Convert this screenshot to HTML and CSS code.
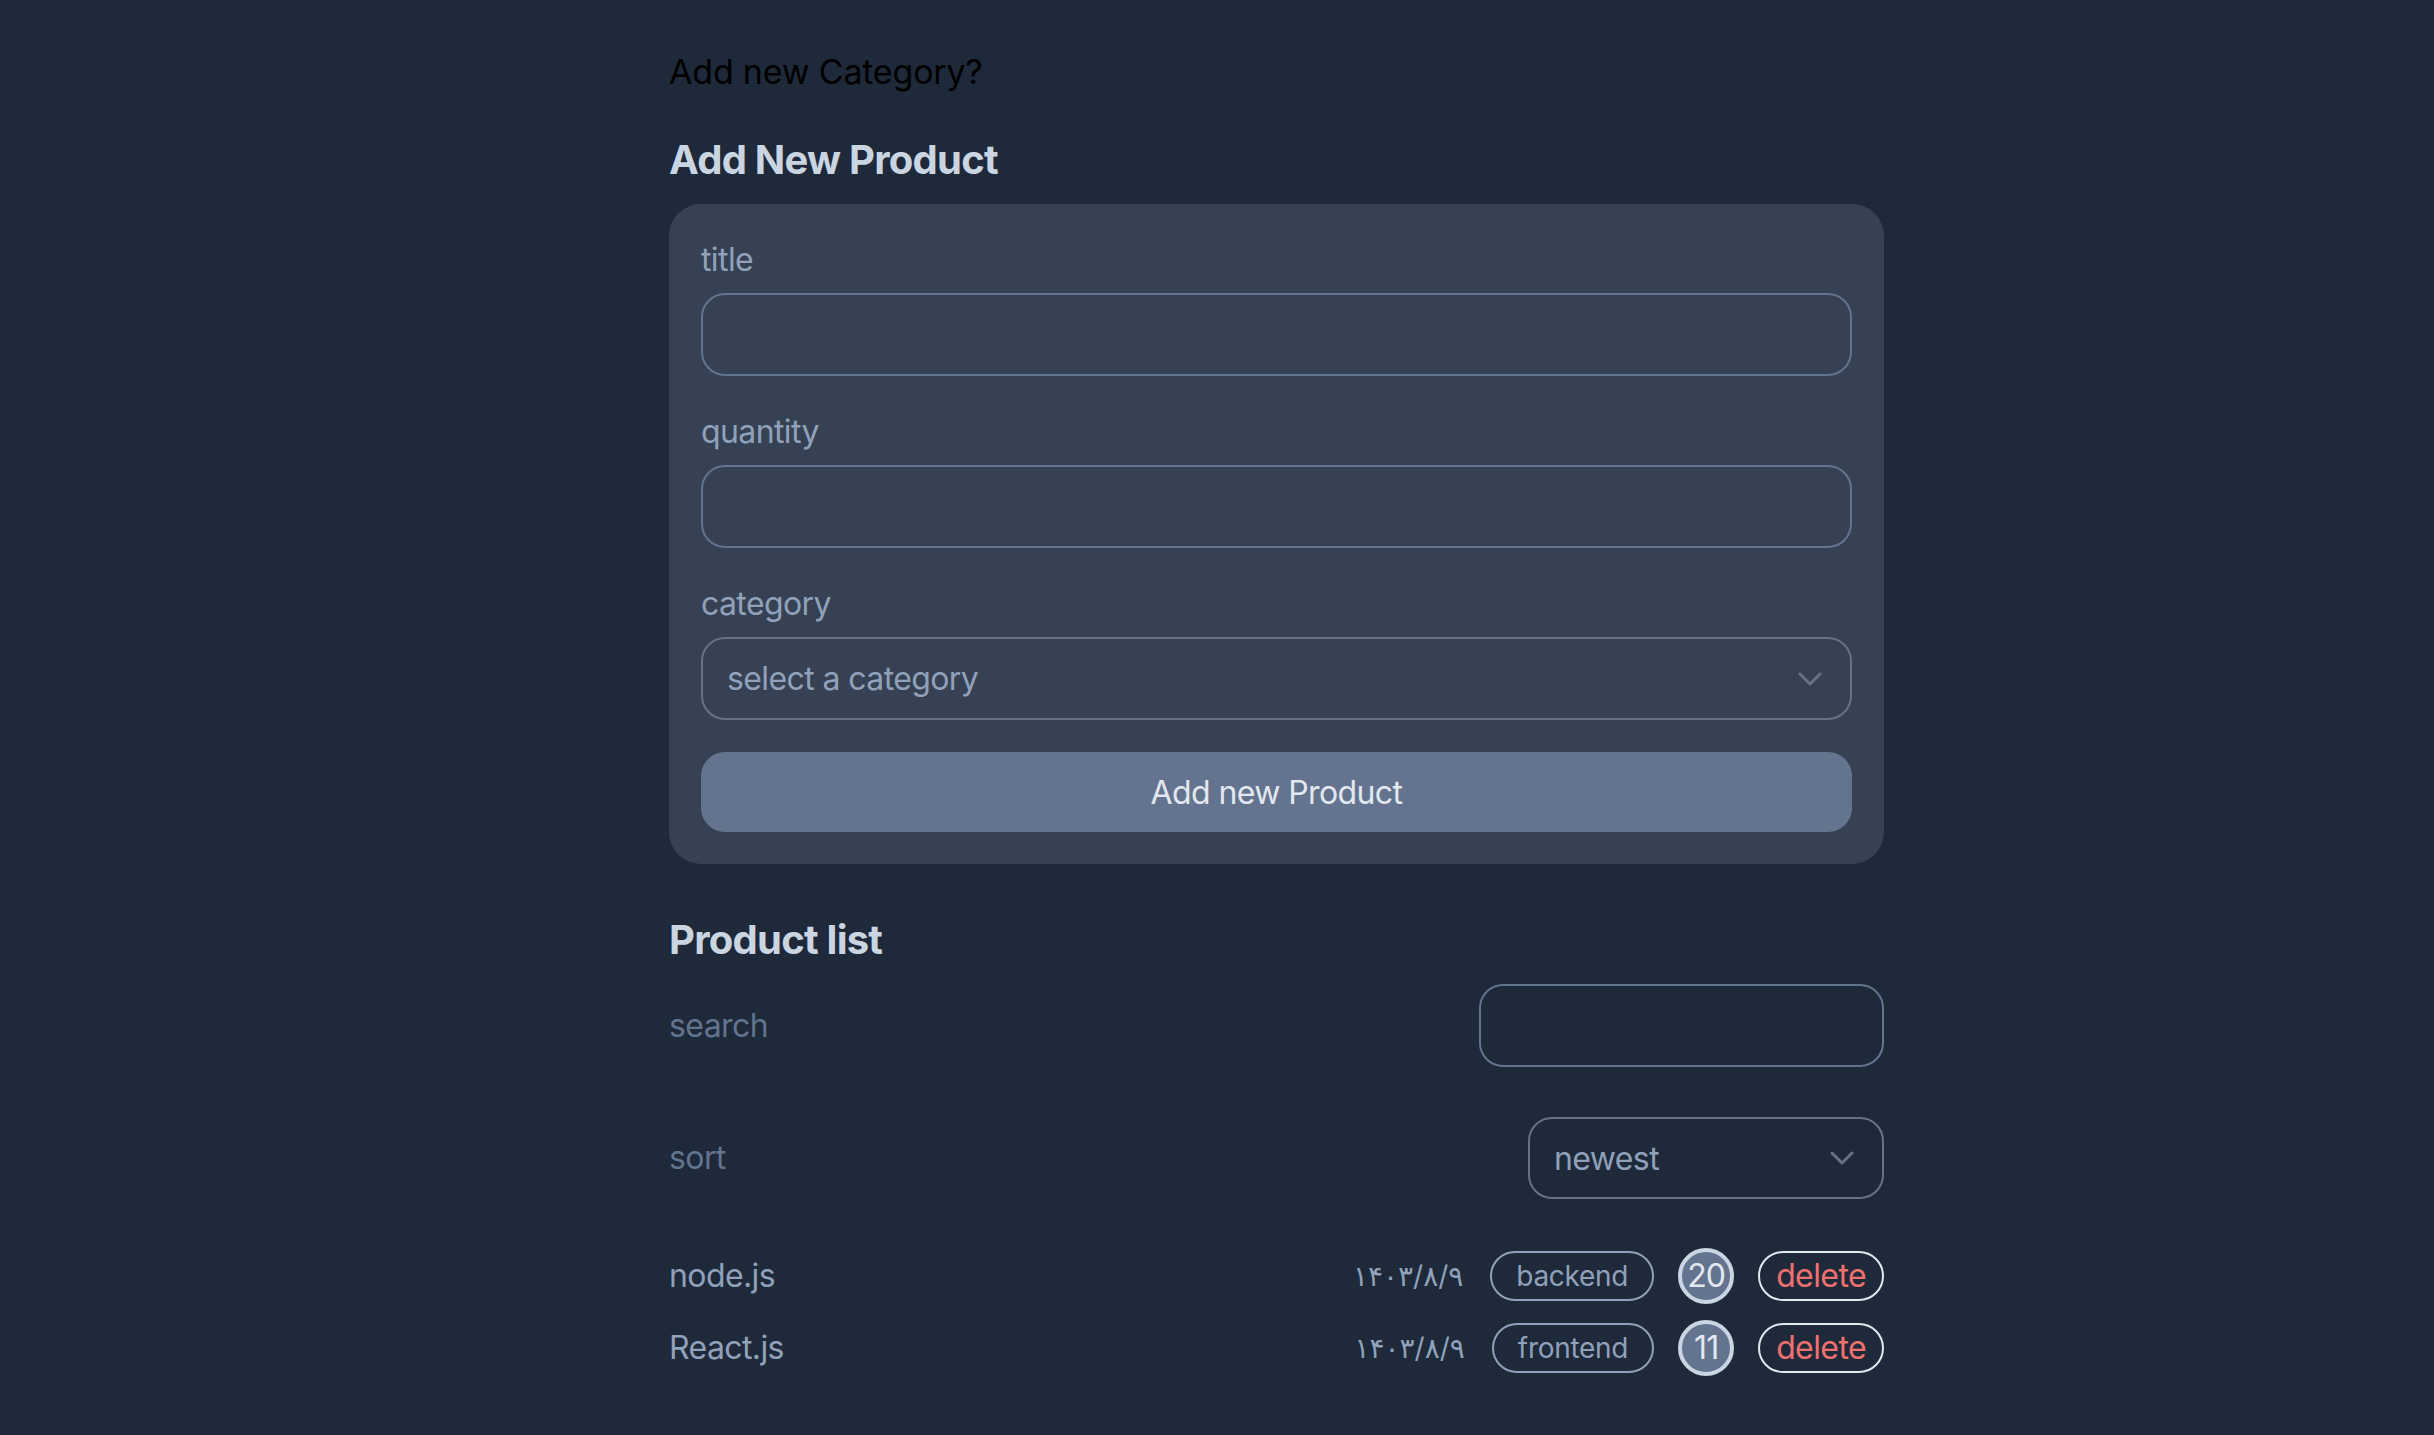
FILE: index.html
```html
<!DOCTYPE html>
<html lang="en">
<head>
<meta charset="utf-8">
<title>Products</title>
<link rel="stylesheet" href="styles.css">
</head>
<body>
<main class="page">
  <p class="category-toggle">Add new Category?</p>

  <section class="form-section">
    <h2 class="section-title">Add New Product</h2>
    <form class="card">
      <div class="field">
        <label class="field-label" for="title">title</label>
        <input class="field-input" id="title" type="text">
      </div>
      <div class="field">
        <label class="field-label" for="quantity">quantity</label>
        <input class="field-input" id="quantity" type="number">
      </div>
      <div class="field">
        <label class="field-label" for="category">category</label>
        <div class="select-wrap">
          <select class="field-input field-select" id="category">
            <option>select a category</option>
          </select>
          <svg class="chevron" viewBox="0 0 24 14" width="24" height="14" aria-hidden="true"><path d="M2 2 L12 12 L22 2" fill="none" stroke="currentColor" stroke-width="3" stroke-linecap="round" stroke-linejoin="round"/></svg>
        </div>
      </div>
      <button class="submit" type="button">Add new Product</button>
    </form>
  </section>

  <section class="list-section">
    <h2 class="section-title list-title">Product list</h2>
    <div class="filter-row">
      <label class="filter-label" for="search">search</label>
      <input class="filter-input search-input" id="search" type="text">
    </div>
    <div class="filter-row sort-row">
      <label class="filter-label" for="sort">sort</label>
      <div class="select-wrap sort-wrap">
        <select class="filter-input sort-select" id="sort">
          <option>newest</option>
          <option>oldest</option>
        </select>
        <svg class="chevron" viewBox="0 0 24 14" width="24" height="14" aria-hidden="true"><path d="M2 2 L12 12 L22 2" fill="none" stroke="currentColor" stroke-width="3" stroke-linecap="round" stroke-linejoin="round"/></svg>
      </div>
    </div>

    <ul class="product-list">
      <li class="product-row">
        <span class="product-name">node.js</span>
        <div class="product-meta">
          <span class="product-date">۱۴۰۳/۸/۹</span>
          <span class="tag">backend</span>
          <span class="qty">20</span>
          <button class="delete" type="button">delete</button>
        </div>
      </li>
      <li class="product-row">
        <span class="product-name">React.js</span>
        <div class="product-meta">
          <span class="product-date">۱۴۰۳/۸/۹</span>
          <span class="tag">frontend</span>
          <span class="qty">11</span>
          <button class="delete" type="button">delete</button>
        </div>
      </li>
    </ul>
  </section>
</main>
</body>
</html>
```

FILE: styles.css
```css
html {
  background: #1e2939;
}

body {
  margin: 0;
  min-height: 100vh;
  background: #1e2939;
  font-family: Inter, "DejaVu Sans", "Noto Sans", sans-serif;
  font-size: 32px;
  line-height: 48px;
  letter-spacing: -0.6px;
}

.page {
  width: 1215px;
  margin-left: 669px;
  padding-top: 46px;
}

.category-toggle {
  margin: 0;
  font-size: 34px;
  line-height: 51px;
  color: #000;
  letter-spacing: -0.2px;
}

.section-title {
  margin: 35px 0 16px;
  font-size: 40px;
  line-height: 56px;
  font-weight: 700;
  color: #cad5e2;
  letter-spacing: -0.75px;
}

.card {
  background: #364153;
  border-radius: 32px;
  padding: 32px;
}

.field {
  margin-bottom: 32px;
}

.field-label {
  display: block;
  margin-bottom: 9px;
  color: #90a1b9;
}

.field-input {
  display: block;
  box-sizing: border-box;
  width: 100%;
  height: 83px;
  padding: 0 24px;
  border: 2px solid #62748e;
  border-radius: 24px;
  background: transparent;
  color: #90a1b9;
  font-family: inherit;
  font-size: 32px;
  letter-spacing: -0.6px;
  outline: none;
}

.field-select {
  border-color: #6a7282;
  appearance: none;
  -webkit-appearance: none;
}

.select-wrap {
  position: relative;
}

.chevron {
  position: absolute;
  right: 30px;
  top: 50%;
  margin-top: -7px;
  color: #6a7282;
  pointer-events: none;
}

.submit {
  display: block;
  width: 100%;
  height: 80px;
  border: none;
  border-radius: 24px;
  background: #64748e;
  color: #e2e8f0;
  font-family: inherit;
  font-size: 32px;
  letter-spacing: -0.6px;
}

.list-title {
  margin-top: 48px;
}

.filter-row {
  display: flex;
  justify-content: space-between;
  align-items: center;
}

.sort-row {
  margin-top: 50px;
}

.filter-label {
  color: #62748e;
}

.filter-input {
  box-sizing: border-box;
  height: 83px;
  padding: 0 24px;
  border: 2px solid #62748e;
  border-radius: 24px;
  background: transparent;
  color: #90a1b9;
  font-family: inherit;
  font-size: 32px;
  letter-spacing: -0.6px;
  outline: none;
}

.search-input {
  width: 405px;
}

.sort-wrap {
  width: 356px;
}

.sort-select {
  width: 100%;
  height: 82px;
  border-color: #6a7282;
  appearance: none;
  -webkit-appearance: none;
}

.product-list {
  list-style: none;
  margin: 49px 0 0;
  padding: 0;
  display: flex;
  flex-direction: column;
  gap: 16px;
}

.product-row {
  display: flex;
  justify-content: space-between;
  align-items: center;
  height: 56px;
}

.product-name {
  color: #90a1b9;
}

.product-meta {
  display: flex;
  align-items: center;
  gap: 24px;
}

.product-date {
  color: #90a1b9;
  font-size: 28px;
  letter-spacing: 0;
  padding-right: 3px;
}

.tag {
  box-sizing: border-box;
  display: flex;
  align-items: center;
  height: 50px;
  padding: 0 24px;
  border: 2px solid #90a1b9;
  border-radius: 999px;
  color: #90a1b9;
  font-size: 28px;
  letter-spacing: -0.3px;
}

.qty {
  box-sizing: border-box;
  display: flex;
  align-items: center;
  justify-content: center;
  width: 56px;
  height: 56px;
  border: 4px solid #cad5e2;
  border-radius: 50%;
  background: #64748e;
  color: #e2e8f0;
  font-size: 32px;
  letter-spacing: -1px;
}

.delete {
  box-sizing: border-box;
  height: 50px;
  padding: 0 16px;
  border: 2px solid #e2e8f0;
  border-radius: 999px;
  background: transparent;
  color: #f07070;
  font-family: inherit;
  font-size: 32px;
  line-height: 44px;
  letter-spacing: -0.6px;
}
```
